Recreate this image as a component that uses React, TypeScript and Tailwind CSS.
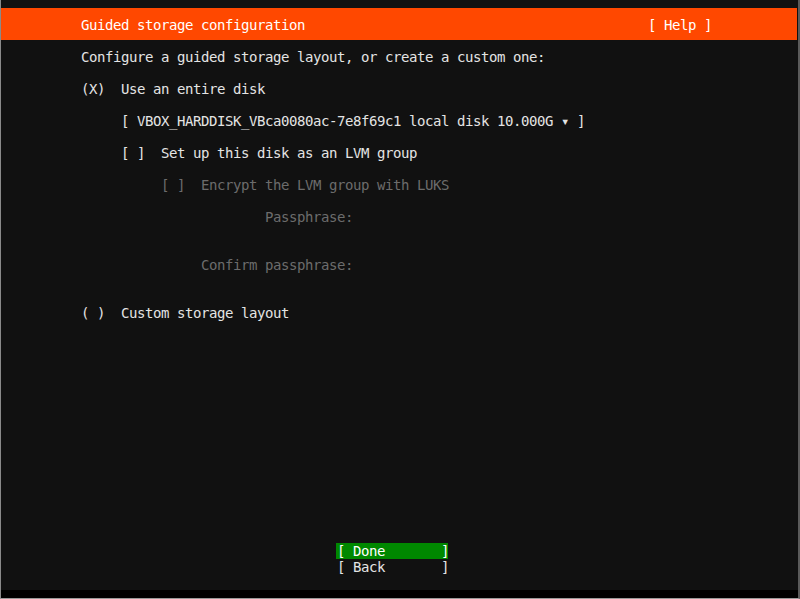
import React from 'react';

type Line = { col: number; text: string; dim?: boolean } | null;

// one terminal row = 16px, one column = 8px
const rows: Line[] = [
  { col: 10, text: 'Configure a guided storage layout, or create a custom one:' },
  null,
  { col: 10, text: '(X)  Use an entire disk' },
  null,
  { col: 15, text: '[ VBOX_HARDDISK_VBca0080ac-7e8f69c1 local disk 10.000G \u25BE ]' },
  null,
  { col: 15, text: '[ ]  Set up this disk as an LVM group' },
  null,
  { col: 20, text: '[ ]  Encrypt the LVM group with LUKS', dim: true },
  null,
  { col: 33, text: 'Passphrase:', dim: true },
  null,
  null,
  { col: 25, text: 'Confirm passphrase:', dim: true },
  null,
  null,
  { col: 10, text: '( )  Custom storage layout' },
];

const Row = ({ line }: { line: Line }) => {
  if (!line) return <div className="h-[16px]" />;
  return (
    <div
      className={`h-[16px] leading-[18px] whitespace-pre ${line.dim ? 'text-[#6c6c6c]' : 'text-[#e4e4e4]'}`}
      style={{ paddingLeft: line.col * 8 }}
    >
      {line.text}
    </div>
  );
};

export default function App() {
  return (
    <div
      className="w-[800px] h-[599px] bg-black border-l border-r-2 border-b border-l-[#8a8a8a] border-r-[#5a5a5a] border-b-[#9a9a9a] flex flex-col text-[14px] tracking-[-0.43px]"
      style={{ fontFamily: '"DejaVu Sans Mono", "Liberation Mono", monospace' }}
    >
      <div className="h-[590px] bg-[#111111] flex flex-col">
        <div className="h-[8px]" />

        {/* title bar */}
        <div className="h-[32px] mr-[1px] bg-[#ff4800] text-white flex items-center pt-[2px] whitespace-pre">
          <span className="pl-[80px] w-[647px]">Guided storage configuration</span>
          <span>[ Help ]</span>
        </div>

        {/* form body */}
        <div className="mt-[8px] flex flex-col">
          {rows.map((line, i) => (
            <Row key={i} line={line} />
          ))}
        </div>

        {/* buttons */}
        <div className="mt-[223px] flex flex-col pl-[335px]">
          <div className="w-[112px] h-[16px] leading-[17px] bg-[#008800] text-white whitespace-pre pl-[1px]">
            {'[ Done       ]'}
          </div>
          <div className="w-[112px] h-[16px] leading-[17px] text-[#e4e4e4] whitespace-pre pl-[1px]">
            {'[ Back       ]'}
          </div>
        </div>
      </div>
      <div className="flex-1 bg-black" />
    </div>
  );
}
